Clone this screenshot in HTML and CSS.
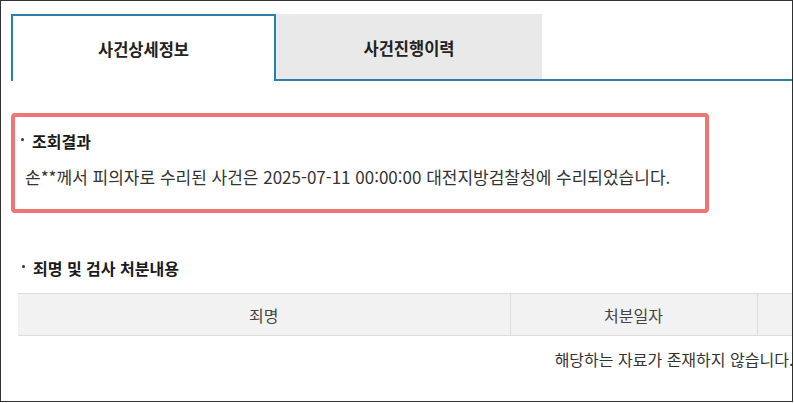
FILE: index.html
```html
<!DOCTYPE html>
<html lang="ko">
<head>
<meta charset="utf-8">
<title>사건상세정보</title>
<link rel="stylesheet" href="styles.css">
</head>
<body>
<div class="frame">
  <div class="tabs">
    <div class="tab tab-active">사건상세정보</div>
    <div class="tab tab-idle">사건진행이력</div>
    <div class="tab-fill"></div>
  </div>

  <div class="result-box">
    <h3 class="sub-title">조회결과</h3>
    <p class="result-text">손**께서 피의자로 수리된 사건은 2025-07-11 00:00:00 대전지방검찰청에 수리되었습니다.</p>
  </div>

  <h3 class="sub-title section-title">죄명 및 검사 처분내용</h3>

  <table class="data-table">
    <colgroup>
      <col class="c1"><col class="c2"><col class="c3">
    </colgroup>
    <thead>
      <tr><th>죄명</th><th>처분일자</th><th></th></tr>
    </thead>
    <tbody>
      <tr><td colspan="3" class="empty">해당하는 자료가 존재하지 않습니다.</td></tr>
    </tbody>
  </table>
</div>
</body>
</html>
```

FILE: styles.css
```css
* { box-sizing: border-box; }

html, body {
  margin: 0;
  padding: 0;
  background: #fff;
}

body {
  font-family: "Noto Sans CJK KR", "Noto Sans", sans-serif;
  color: #222;
}

.frame {
  width: 793px;
  height: 402px;
  border: 1px solid #333;
  overflow: hidden;
  padding: 13px 0 0 10px;
}

/* tabs */
.tabs {
  display: flex;
  height: 67px;
}

.tab {
  display: flex;
  align-items: center;
  justify-content: center;
  font-size: 16.5px;
  font-weight: 700;
  color: #222;
}

.tab-active {
  width: 265px;
  border: 2px solid #2a7fab;
  border-bottom: none;
  background: #fff;
}

.tab-idle {
  width: 266px;
  background: #e9e9e9;
  border-bottom: 2px solid #2a7fab;
  padding-top: 2px;
}

.tab-fill {
  flex: 1;
  border-bottom: 2px solid #2a7fab;
}

/* result box */
.result-box {
  width: 698px;
  margin-top: 32px;
  border: 4px solid #f07676;
  border-radius: 4px;
  padding: 12px 10px 20px 6px;
}

.sub-title {
  display: flex;
  align-items: center;
  margin: 0;
  font-size: 16px;
  line-height: 24px;
  font-weight: 700;
  color: #1a1a1a;
}

.sub-title::before {
  content: "";
  width: 3px;
  height: 3px;
  border-radius: 50%;
  background: #333;
  margin: 0 8px 3px 0;
  flex: none;
}

.result-text {
  margin: 12px 0 0 4px;
  font-size: 17px;
  line-height: 24px;
  color: #333;
}

/* section */
.section-title {
  margin-top: 43px;
  padding-left: 11px;
}

.data-table {
  margin: 13px 0 0 7px;
  border-collapse: collapse;
  table-layout: fixed;
  width: 1312px;
  font-size: 16px;
  color: #444;
}

.c1 { width: 492px; }
.c2 { width: 247px; }
.c3 { width: 573px; }

.data-table th {
  height: 42px;
  background: #f2f2f2;
  border-top: 1px solid #dcdcdc;
  border-bottom: 1px solid #dcdcdc;
  border-left: 1px solid #dcdcdc;
  font-weight: 400;
  text-align: center;
  padding: 0;
}

.data-table th:first-child { border-left: none; }

.data-table td.empty {
  height: 46px;
  text-align: center;
  color: #333;
  padding: 0;
}
```
